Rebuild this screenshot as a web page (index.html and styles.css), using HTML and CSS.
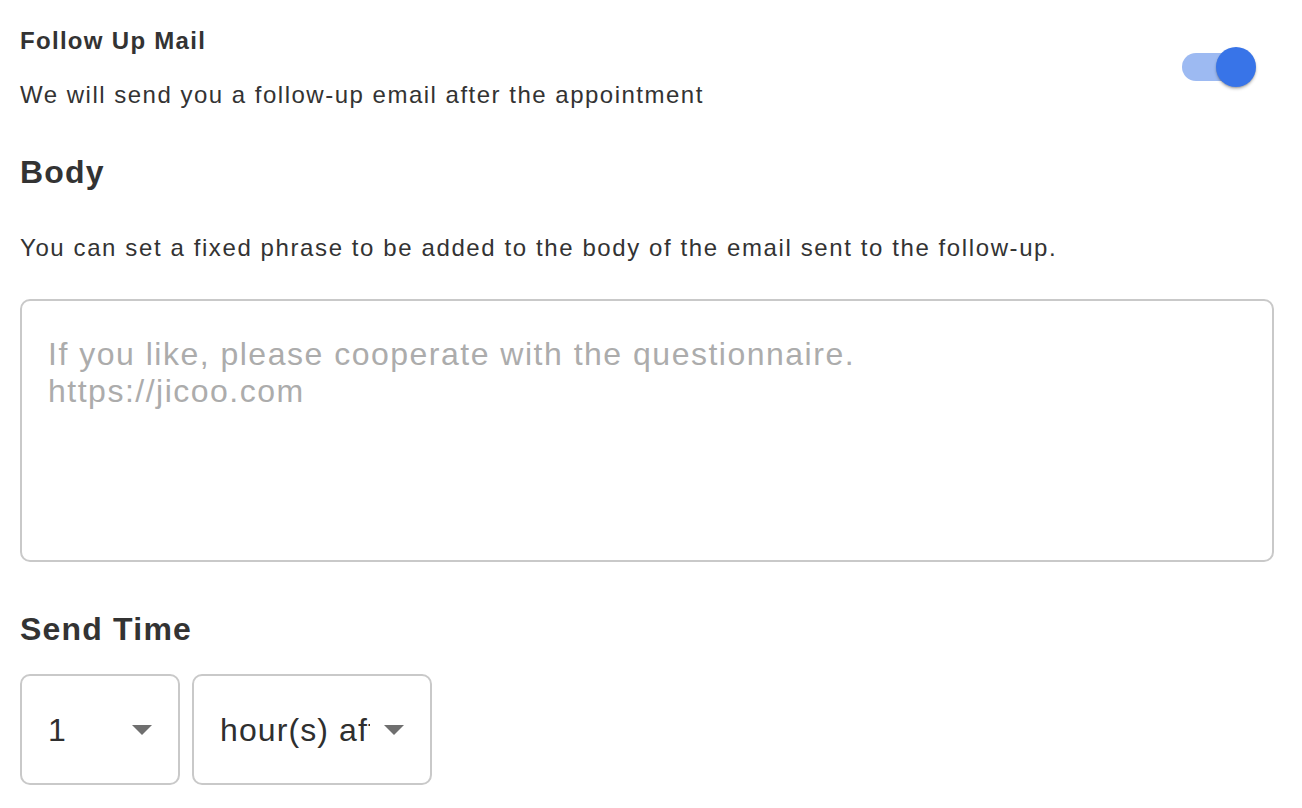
FILE: index.html
```html
<!DOCTYPE html>
<html>
<head>
<meta charset="utf-8">
<link rel="stylesheet" href="styles.css">
</head>
<body>
<div class="page">
  <div class="toggle-row">
    <div class="toggle-text">
      <div class="title">Follow Up Mail</div>
      <div class="desc desc-top">We will send you a follow-up email after the appointment</div>
    </div>
    <div class="switch">
      <span class="track"></span>
      <span class="thumb"></span>
    </div>
  </div>
  <h2 class="heading heading-body">Body</h2>
  <p class="desc desc-body">You can set a fixed phrase to be added to the body of the email sent to the follow-up.</p>
  <textarea class="area" placeholder="If you like, please cooperate with the questionnaire.&#10;https://jicoo.com"></textarea>
  <h2 class="heading heading-send">Send Time</h2>
  <div class="selects">
    <div class="select select-num">
      <span class="value">1</span>
      <svg class="arrow" viewBox="7 10 10 5" width="20" height="10"><path d="M7 10l5 5 5-5z" fill="#6f6f6f"/></svg>
    </div>
    <div class="select select-unit">
      <span class="value">hour(s) after</span>
      <svg class="arrow" viewBox="7 10 10 5" width="20" height="10"><path d="M7 10l5 5 5-5z" fill="#6f6f6f"/></svg>
    </div>
  </div>
</div>
</body>
</html>
```
FILE: styles.css
```css
html, body {
  margin: 0;
  padding: 0;
  background: #ffffff;
}
body {
  font-family: "Liberation Sans", Arial, Helvetica, sans-serif;
  color: #333333;
}
.page {
  padding: 26px 28px 0 20px;
  display: flex;
  flex-direction: column;
}
.toggle-row {
  display: flex;
  justify-content: space-between;
  align-items: flex-start;
}
.toggle-text {
  display: flex;
  flex-direction: column;
}
.title {
  font-size: 24px;
  font-weight: 700;
  line-height: 30px;
  letter-spacing: 1.3px;
}
.desc {
  font-size: 24px;
  line-height: 30px;
  letter-spacing: 1.5px;
  margin: 0;
}
.desc-top {
  margin-top: 24px;
}
.switch {
  position: relative;
  width: 74px;
  height: 40px;
  margin-top: 21px;
  margin-right: 18px;
}
.track {
  position: absolute;
  left: 0;
  top: 6px;
  width: 58px;
  height: 28px;
  border-radius: 14px;
  background: #9dbaf2;
}
.thumb {
  position: absolute;
  right: 0;
  top: 0;
  width: 40px;
  height: 40px;
  border-radius: 50%;
  background: #3874e8;
  box-shadow: 0 2px 3px rgba(0, 0, 0, 0.25), 0 1px 1px rgba(0, 0, 0, 0.12);
}
.heading {
  font-size: 32px;
  font-weight: 700;
  line-height: 40px;
  letter-spacing: 1.2px;
  margin: 0;
}
.heading-body {
  margin-top: 42px;
}
.desc-body {
  margin-top: 41px;
  letter-spacing: 1.6px;
}
.area {
  margin-top: 36px;
  box-sizing: border-box;
  width: 100%;
  height: 263px;
  border: 2px solid #c9c9c9;
  border-radius: 10px;
  padding: 35px 26px;
  font-family: "Liberation Sans", Arial, Helvetica, sans-serif;
  font-size: 32px;
  line-height: 37px;
  letter-spacing: 1.5px;
  color: #333333;
  resize: none;
  outline: none;
  background: #ffffff;
}
.area::placeholder {
  color: #acacac;
  opacity: 1;
}
.heading-send {
  margin-top: 47px;
}
.selects {
  margin-top: 25px;
  display: flex;
  gap: 12px;
}
.select {
  box-sizing: border-box;
  height: 111px;
  border: 2px solid #c9c9c9;
  border-radius: 10px;
  display: flex;
  align-items: center;
  padding: 0 26px;
  justify-content: space-between;
}
.select-num {
  width: 160px;
}
.select-unit {
  width: 240px;
}
.value {
  font-size: 32px;
  letter-spacing: 1.1px;
  line-height: 40px;
  white-space: nowrap;
  overflow: hidden;
  color: #2f2f2f;
}
.select-unit .value {
  width: 150px;
}
.arrow {
  flex: none;
  display: block;
}
```
